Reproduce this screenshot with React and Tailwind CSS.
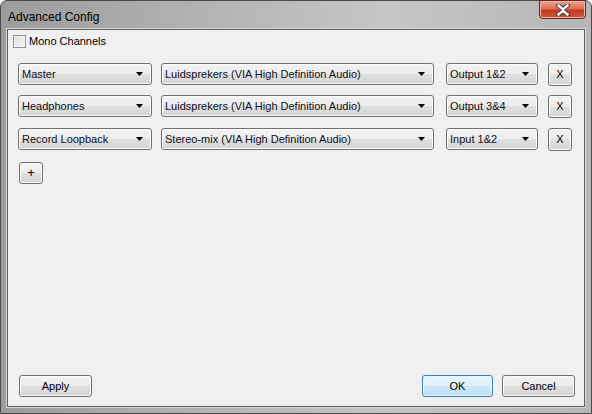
import React from "react";

const rows = [
  { channel: "Master", device: "Luidsprekers (VIA High Definition Audio)", port: "Output 1&2", gap: "mt-0" },
  { channel: "Headphones", device: "Luidsprekers (VIA High Definition Audio)", port: "Output 3&4", gap: "mt-[9px]" },
  { channel: "Record Loopback", device: "Stereo-mix (VIA High Definition Audio)", port: "Input 1&2", gap: "mt-[10px]" },
];

function Combo({ label, width }) {
  return (
    <div
      className={`${width} h-[22px] flex items-center justify-between rounded-[3px] border border-[#707070] bg-[linear-gradient(to_bottom,#f3f3f3_0%,#ececec_50%,#e0e0e0_50%,#d4d4d4_100%)] pl-[3px] pr-[8px] shadow-[inset_0_0_0_1px_#fcfcfc]`}
    >
      <span className="text-[#10101a] whitespace-nowrap">{label}</span>
      <svg width="7" height="4" viewBox="0 0 7 4">
        <polygon points="0,0 7,0 3.5,4" fill="#000" />
      </svg>
    </div>
  );
}

function Button({ children, className = "", primary = false }) {
  return (
    <div
      className={`flex items-center justify-center rounded-[3px] border ${
        primary
          ? "border-[#3c7fb1] bg-[linear-gradient(to_bottom,#eaf6fd_0%,#e0f1fb_50%,#cfe8f9_50%,#bcdff5_100%)] shadow-[inset_0_0_0_1px_#e8f5fd]"
          : "border-[#707070] bg-[linear-gradient(to_bottom,#f3f3f3_0%,#ececec_50%,#e0e0e0_50%,#d4d4d4_100%)] shadow-[inset_0_0_0_1px_#fcfcfc]"
      } text-black ${className}`}
    >
      {children}
    </div>
  );
}

export default function App() {
  return (
    <div className="w-[592px] h-[414px] bg-white font-['Liberation_Sans',Arial,sans-serif] text-[11px]">
      <div className="w-full h-full flex flex-col rounded-t-[7px] border border-[#4a4a4a] bg-[linear-gradient(to_right,#9c9c9c_0%,#b0b0b0_30%,#c6c6c6_65%,#b6b6b6_100%)] px-[6px] pb-[6px]">
        {/* Title bar */}
        <div className="h-[28px] flex items-start justify-between">
          <span className="mt-[7px] pl-[1px] text-[12px] text-black">Advanced Config</span>
          <div className="relative w-[47px] h-[19px] mr-[-1px] mt-[-1px] flex items-center justify-center rounded-b-[4px] border border-[#6b2418] bg-[linear-gradient(to_bottom,#eba592_0%,#dc6f55_45%,#c23a22_55%,#d45a3a_100%)] shadow-[inset_0_0_0_1px_#f0b7a8]">
            <svg width="14" height="12" viewBox="0 0 14 12">
              <path
                d="M2 1 L7 5 L12 1 M2 11 L7 7 L12 11 M7 5 L7 7"
                stroke="#3a3a3a"
                strokeWidth="4.2"
                fill="none"
                strokeLinecap="square"
              />
              <path
                d="M2.5 1.5 L7 5.3 L11.5 1.5 M2.5 10.5 L7 6.7 L11.5 10.5 M7 5.3 L7 6.7"
                stroke="#ffffff"
                strokeWidth="2.4"
                fill="none"
                strokeLinecap="square"
              />
            </svg>
          </div>
        </div>

        {/* Client area */}
        <div className="flex-1 flex flex-col border border-[#5e5e5e] bg-[#f0f0f0] px-[5px] pt-[5px] pb-[9px] shadow-[0_0_0_1px_#d8d8d8]">
          <div className="h-[13px] flex items-center gap-[3px]">
            <div className="w-[13px] h-[13px] border border-[#8e8f8f] bg-[linear-gradient(135deg,#dcdcdc_0%,#f6f6f6_100%)] shadow-[inset_0_0_0_1px_#f4f4f4]" />
            <span className="text-black">Mono Channels</span>
          </div>

          <div className="flex flex-col mt-[15px] pl-[5px]">
            {rows.map((r) => (
              <div key={r.channel} className={`flex items-start h-[23px] ${r.gap}`}>
                <Combo label={r.channel} width="w-[134px]" />
                <div className="ml-[9px]">
                  <Combo label={r.device} width="w-[273px]" />
                </div>
                <div className="ml-[12px]">
                  <Combo label={r.port} width="w-[92px]" />
                </div>
                <Button className="ml-[10px] w-[24px] h-[23px]">X</Button>
              </div>
            ))}
            <Button className="mt-[11px] ml-[1px] w-[24px] h-[22px] text-[13px]">+</Button>
          </div>

          <div className="mt-auto flex items-center pl-[6px] pr-[4px]">
            <Button className="w-[73px] h-[22px]">Apply</Button>
            <div className="flex-1" />
            <Button primary className="w-[71px] h-[22px]">OK</Button>
            <Button className="ml-[9px] w-[73px] h-[22px]">Cancel</Button>
          </div>
        </div>
      </div>
    </div>
  );
}
